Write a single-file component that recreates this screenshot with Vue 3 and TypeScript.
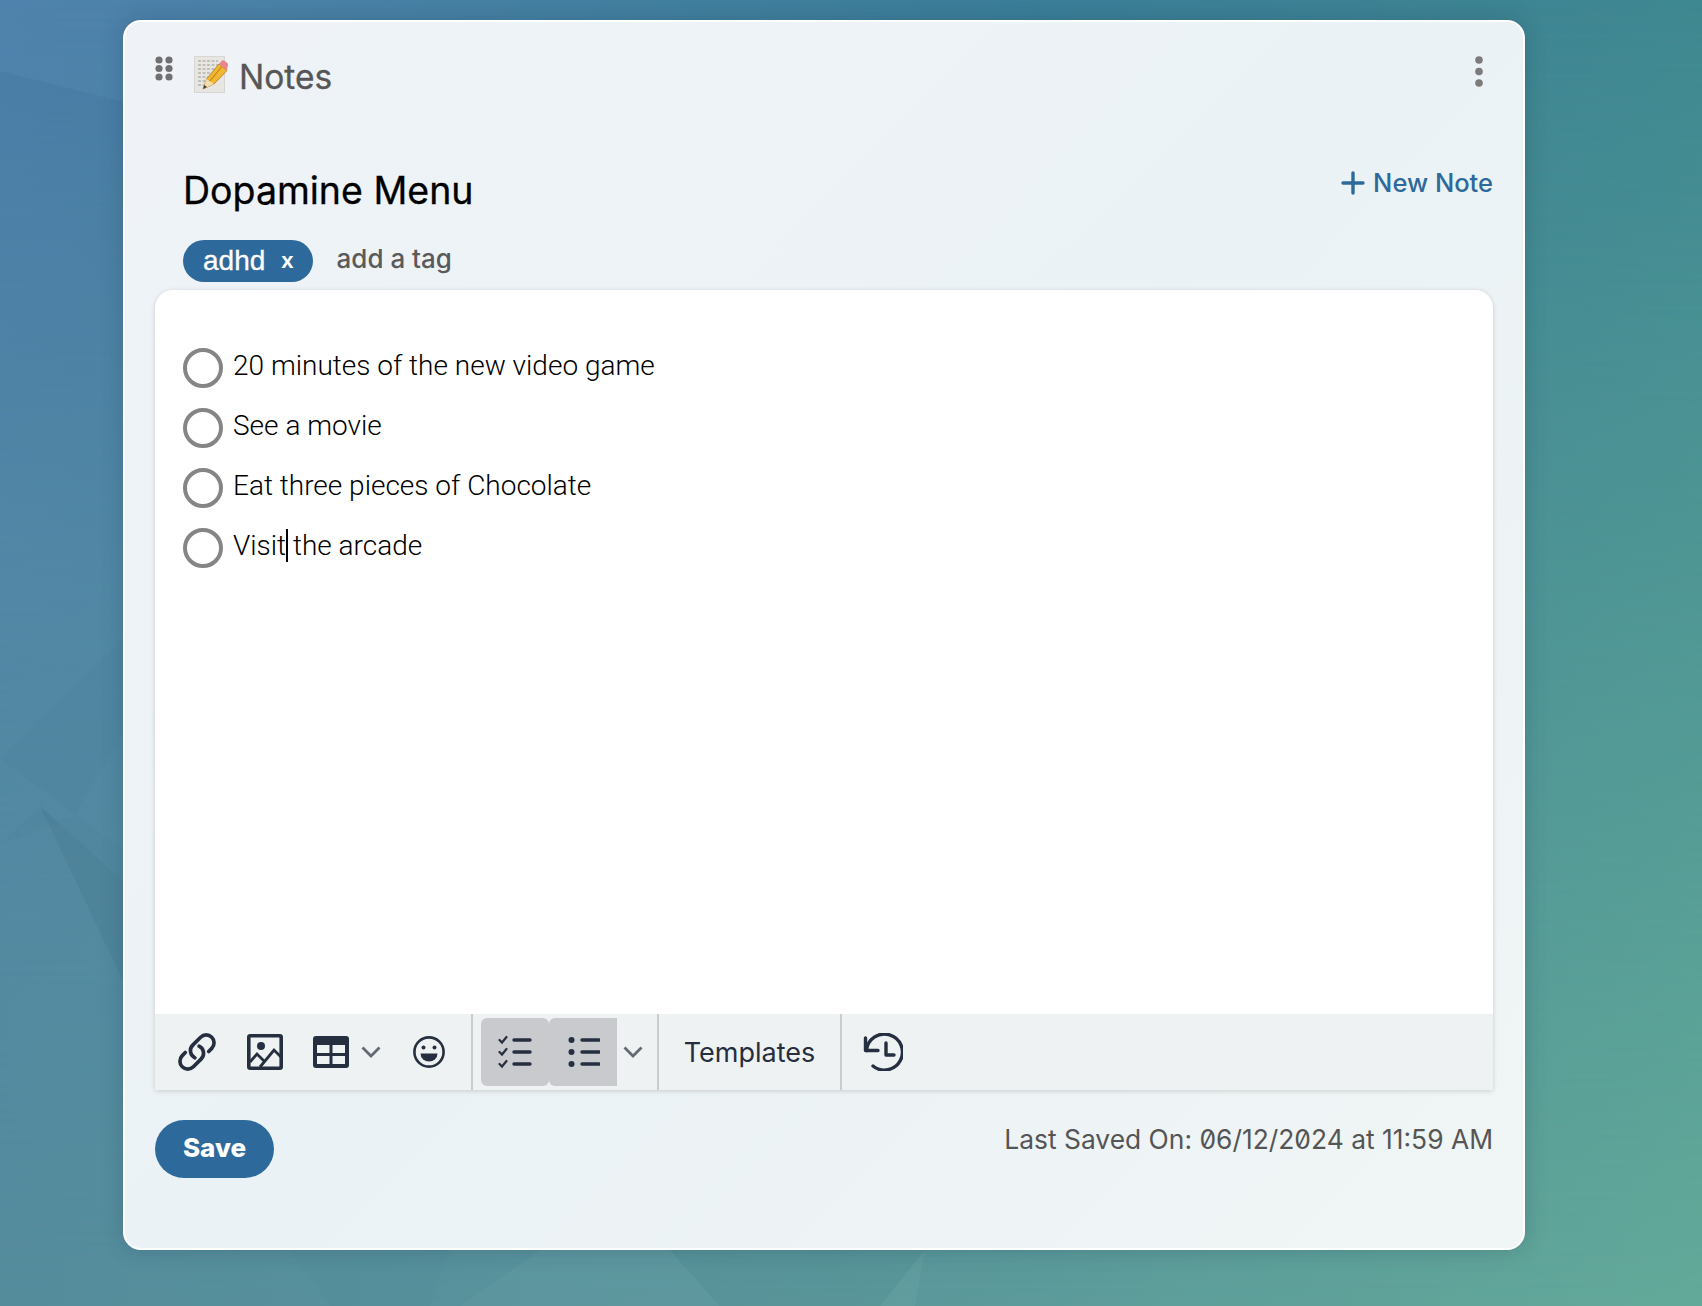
<script setup lang="ts">
const items: string[] = [
  '20 minutes of the new video game',
  'See a movie',
  'Eat three pieces of Chocolate',
]
</script>

<template>
  <div class="page">
    <svg class="facets" viewBox="0 0 1702 1306" preserveAspectRatio="none" aria-hidden="true">
      <defs>
        <linearGradient id="wedge" x1="0" y1="0" x2="0" y2="1">
          <stop offset="0" stop-color="#2f5f8c" stop-opacity="0.16" />
          <stop offset="1" stop-color="#2f5f8c" stop-opacity="0" />
        </linearGradient>
      </defs>
      <polygon points="0,71 125,102 125,560 0,500" fill="url(#wedge)" />
      <polygon points="0,758 125,637 125,730 75,815" fill="#2f5f80" opacity="0.06" />
      <polygon points="40,806 125,883 125,985" fill="#2f5f70" opacity="0.13" />
      <polygon points="0,845 75,815 125,850 125,883 40,806" fill="#2f5f70" opacity="0.03" />
      <polygon points="290,1250 450,1250 430,1306 330,1306" fill="#2f6a70" opacity="0.03" />
      <polygon points="540,1250 670,1250 720,1306 460,1306" fill="#ffffff" opacity="0.03" />
      <polygon points="670,1250 925,1250 880,1306 720,1306" fill="#2f6a70" opacity="0.04" />
      <polygon points="925,1250 880,1306 915,1306" fill="#ffffff" opacity="0.04" />
    </svg>
    <main class="card">
      <header class="top">
        <div class="title-wrap">
          <svg class="grip" viewBox="0 0 18 25" aria-hidden="true">
            <circle cx="4" cy="4" r="3.6" /><circle cx="14" cy="4" r="3.6" />
            <circle cx="4" cy="12.5" r="3.6" /><circle cx="14" cy="12.5" r="3.6" />
            <circle cx="4" cy="21" r="3.6" /><circle cx="14" cy="21" r="3.6" />
          </svg>
          <svg class="memo" viewBox="0 0 34 37" aria-hidden="true">
            <rect x="0.5" y="0.5" width="30" height="36" fill="#e8e6e2" stroke="#d8d6d2" />
            <g stroke="#8b8883" stroke-width="0.8" fill="none" stroke-dasharray="3 1.500">
              <path d="M4 5h20M4 9h22M4 13h20M4 17h17M4 21h10M4 25h7M4 29h6" />
            </g>
            <path d="M9 33l3.500-10L25 8l8 6.500L20 28z" fill="#f2b832" stroke="#a9781a" stroke-width="0.8" />
            <path d="M15 26L28 10.500" stroke="#c98d1e" stroke-width="1.200" fill="none" />
            <path d="M9 33l3.500-10 7.500 5z" fill="#f3dcae" />
            <path d="M9 33l1.300-4 2.700 2z" fill="#3a3a3a" />
            <path d="M25 8l2.300-2.800a2.500 2.500 0 0 1 3.500-.3l2.500 2a2.500 2.500 0 0 1 .3 3.500L33 14.500z" fill="#e8858d" />
          </svg>
          <h2 class="app-title">Notes</h2>
        </div>
        <svg class="kebab" viewBox="0 0 8 31" aria-hidden="true">
          <circle cx="4" cy="4" r="3.800" /><circle cx="4" cy="15.500" r="3.800" /><circle cx="4" cy="27" r="3.800" />
        </svg>
      </header>

      <section class="heading">
        <h1 class="note-title">Dopamine Menu</h1>
        <a class="new-note">
          <svg class="plus" viewBox="0 0 24 24" aria-hidden="true"><path d="M12 2v20M2 12h20" /></svg>
          New Note
        </a>
      </section>

      <div class="tags">
        <span class="tag"><span class="tag-name">adhd</span><b class="tag-x">x</b></span>
        <span class="add-tag">add a tag</span>
      </div>

      <section class="editor">
        <div class="doc">
          <div v-for="item in items" :key="item" class="todo">
            <span class="radio"></span>
            <span class="todo-text">{{ item }}</span>
          </div>
          <div class="todo">
            <span class="radio"></span>
            <span class="todo-text">Visit<i class="caret"></i> the arcade</span>
          </div>
        </div>
        <div class="toolbar">
          <div class="group group-a">
            <svg class="ic link" viewBox="0 0 24 24" aria-hidden="true"><path d="M13.190 8.688a4.500 4.500 0 0 1 1.242 7.244l-4.500 4.500a4.500 4.500 0 0 1-6.364-6.364l1.757-1.757m13.350-.622 1.757-1.757a4.500 4.500 0 0 0-6.364-6.364l-4.500 4.500a4.500 4.500 0 0 0 1.242 7.244" /></svg>
            <svg class="ic image" viewBox="0 0 36 36" aria-hidden="true">
              <rect x="1.800" y="1.800" width="32.400" height="32.400" rx="1.500" fill="none" stroke="#252f3f" stroke-width="3.600" />
              <circle cx="14" cy="12" r="4" fill="#252f3f" />
              <path d="M3 28l7-8 8 8M13 33l14-17 8 8" fill="none" stroke="#252f3f" stroke-width="2.800" />
            </svg>
            <span class="table-wrap">
              <svg class="ic table" viewBox="0 0 36 32" aria-hidden="true">
                <rect width="36" height="32" rx="3" fill="#252f3f" />
                <rect x="4" y="9" width="12.500" height="8" fill="#eff2f3" /><rect x="19.500" y="9" width="12.500" height="8" fill="#eff2f3" />
                <rect x="4" y="20" width="12.500" height="8" fill="#eff2f3" /><rect x="19.500" y="20" width="12.500" height="8" fill="#eff2f3" />
              </svg>
              <svg class="chev" viewBox="0 0 20 12" aria-hidden="true"><path d="M1.500 1.500l8.500 8.500 8.500-8.500" /></svg>
            </span>
            <svg class="ic smile" viewBox="0 0 32 32" aria-hidden="true">
              <circle cx="16" cy="16" r="14.600" fill="none" stroke="#252f3f" stroke-width="2.600" />
              <circle cx="10.500" cy="11.500" r="2" fill="#252f3f" /><circle cx="21.500" cy="11.500" r="2" fill="#252f3f" />
              <path d="M7.500 17.500h17a8.500 8 0 0 1-17 0z" fill="#252f3f" />
            </svg>
          </div>
          <div class="group group-b">
            <span class="toggle toggle-l">
              <svg class="ic lists" viewBox="0 0 34 34" aria-hidden="true">
                <path d="M1.500 5l2.500 2.500L8.500 2M1.500 17l2.500 2.500L8.500 14M1.500 29l2.500 2.500L8.500 26" class="thin" />
                <path d="M16 5h16M16 17h16M16 29h16" />
              </svg>
            </span>
            <span class="toggle toggle-r">
              <svg class="ic lists" viewBox="0 0 34 34" aria-hidden="true">
                <circle cx="5.500" cy="5" r="3" class="dot" /><circle cx="5.500" cy="17" r="3" class="dot" /><circle cx="5.500" cy="29" r="3" class="dot" />
                <path d="M16 5h17M16 17h17M16 29h17" />
              </svg>
            </span>
            <svg class="chev chev-b" viewBox="0 0 20 12" aria-hidden="true"><path d="M1.500 1.500l8.500 8.500 8.500-8.500" /></svg>
          </div>
          <div class="group group-c">Templates</div>
          <div class="group group-d">
            <svg class="ic history" viewBox="0 0 40 38" aria-hidden="true">
              <path d="M3.500 17.500A18 18 0 1 1 10 33" />
              <path d="M2.500 5v12.500H15" />
              <path d="M23 10v12h8" />
            </svg>
          </div>
        </div>
      </section>

      <footer class="foot">
        <button class="save" type="button">Save</button>
        <span class="saved">Last Saved On: <span class="date">06/12/2024</span> at 11:59 AM</span>
      </footer>
    </main>
  </div>
</template>

<style>
html, body { margin: 0; padding: 0; }
</style>

<style scoped>
.page {
  position: relative;
  width: 1702px;
  height: 1306px;
  overflow: hidden;
  box-sizing: border-box;
  padding: 20px 177px 56px 123px;
  background: linear-gradient(to right, #5083ad 0%, #3b7e99 60%, #3f8891 100%);
  font-family: Inter, "Liberation Sans", sans-serif;
}
.page::before {
  content: "";
  position: absolute;
  inset: 0;
  background: linear-gradient(to right, #558c9c 0%, #5a979b 50%, #63a999 100%);
  -webkit-mask-image: linear-gradient(to bottom, transparent 0%, #000 100%);
  mask-image: linear-gradient(to bottom, transparent 0%, #000 100%);
}
.facets { position: absolute; inset: 0; width: 100%; height: 100%; }
.card {
  position: relative;
  box-sizing: border-box;
  height: 1230px;
  border: 2px solid #ffffff;
  border-radius: 18px;
  background: linear-gradient(135deg, #eff3f7 0%, #ebf2f5 50%, #f0f5f5 100%);
  box-shadow: 0 0 22px rgba(25, 55, 75, 0.24);
  padding: 0 30px;
  display: flex;
  flex-direction: column;
}
.top {
  display: flex;
  justify-content: space-between;
  align-items: flex-start;
  height: 146px;
  padding-top: 34px;
  box-sizing: border-box;
}
.title-wrap { display: flex; align-items: flex-start; }
.grip { width: 18px; height: 25px; fill: #707070; margin-right: 21px; }
.memo { width: 34px; height: 37px; margin-right: 11px; }
.app-title {
  margin: 2px 0 0;
  font-size: 33.500px;
  line-height: 38px;
  font-weight: 400;
  color: #565656;
  -webkit-text-stroke: 0.3px #565656;
}
.kebab { width: 8px; height: 31px; fill: #7b7b7b; margin-right: 10px; }
.heading {
  display: flex;
  justify-content: space-between;
  align-items: flex-start;
  padding-left: 28px;
  height: 72px;
  box-sizing: border-box;
}
.note-title {
  margin: 0;
  font-size: 37.500px;
  line-height: 46px;
  font-weight: 400;
  color: #000;
  -webkit-text-stroke: 0.3px #000;
}
.new-note {
  display: flex;
  align-items: center;
  gap: 8px;
  font-size: 25.500px;
  line-height: 30px;
  color: #2d6a9b;
  font-weight: 500;
}
.plus { width: 24px; height: 24px; fill: none; stroke: #2d6a9b; stroke-width: 3.400; stroke-linecap: round; }
.tags {
  display: flex;
  align-items: center;
  padding-left: 28px;
  height: 42px;
  gap: 24px;
}
.tag {
  display: flex;
  align-items: center;
  height: 42px;
  box-sizing: border-box;
  padding: 0 19px 0 20px;
  border-radius: 21px;
  background: #2d6a9b;
  color: #fff;
  font-family: "Liberation Sans", sans-serif;
}
.tag-name { font-size: 28px; -webkit-text-stroke: 0.3px #fff; }
.tag-x { font-size: 22px; margin-left: 16px; }
.add-tag { font-size: 26px; color: #5a5a5a; font-weight: 500; margin-bottom: 6px; }
.editor {
  margin-top: 8px;
  height: 800px;
  background: #fff;
  border-radius: 18px 18px 0 0;
  box-shadow: 0 1px 5px rgba(0, 0, 0, 0.16);
  display: flex;
  flex-direction: column;
}
.doc { flex: 1; padding: 58px 28px 0; font-family: Roboto, sans-serif; }
.todo { display: flex; height: 60px; }
.radio {
  box-sizing: border-box;
  width: 40px;
  height: 40px;
  border: 4px solid #858585;
  border-radius: 50%;
  margin-right: 10px;
}
.todo-text { font-size: 28px; line-height: 36px; color: #000; font-weight: 300; }
.caret {
  display: inline-block;
  width: 2px;
  height: 33px;
  background: #000;
  vertical-align: -7px;
  margin-right: -2px;
}
.toolbar {
  height: 76px;
  flex: none;
  display: flex;
  background: #eff2f3;
}
.group { display: flex; align-items: center; height: 100%; box-sizing: border-box; border-right: 2px solid #cbcccd; }
.group-a { width: 318px; padding-left: 21px; }
.group-b { width: 186px; padding-left: 8px; }
.group-c { width: 183px; justify-content: center; font-size: 27px; color: #252f3f; font-weight: 400; }
.group-d { border-right: 0; padding-left: 21px; }
.ic { display: block; flex: none; }
.link { width: 42px; height: 42px; fill: none; stroke: #252f3f; stroke-width: 2.100; stroke-linecap: round; stroke-linejoin: round; margin-right: 29px; }
.image { width: 36px; height: 36px; margin-right: 30px; }
.table-wrap { display: flex; align-items: center; margin-right: 32px; }
.table { width: 36px; height: 32px; }
.chev { width: 20px; height: 12px; fill: none; stroke: #646a73; stroke-width: 2.800; margin-left: 12px; }
.smile { width: 32px; height: 32px; }
.toggle {
  display: flex;
  align-items: center;
  justify-content: center;
  height: 68px;
  background: #c9cacd;
}
.toggle-l { width: 68px; border-radius: 6px; }
.toggle-r { width: 68px; border-radius: 6px 0 0 6px; }
.lists { width: 34px; height: 34px; fill: none; stroke: #252f3f; stroke-width: 3.400; stroke-linecap: round; }
.lists .thin { stroke-width: 2.200; }
.lists .dot { fill: #252f3f; stroke: none; }
.chev-b { margin-left: 6px; }
.history { width: 40px; height: 38px; fill: none; stroke: #252f3f; stroke-width: 3.400; stroke-linecap: round; stroke-linejoin: round; }
.foot {
  display: flex;
  justify-content: space-between;
  align-items: flex-start;
  margin-top: 30px;
}
.save {
  width: 119px;
  height: 58px;
  border: 0;
  border-radius: 29px;
  background: #2d6a9b;
  color: #fff;
  font-family: Inter, sans-serif;
  font-size: 26px;
  font-weight: 800;
  padding: 0 0 3px;
}
.saved { font-size: 26.400px; line-height: 34px; margin-top: 2px; color: #555; font-weight: 400; }
.date { font-variant-numeric: slashed-zero; }
</style>
